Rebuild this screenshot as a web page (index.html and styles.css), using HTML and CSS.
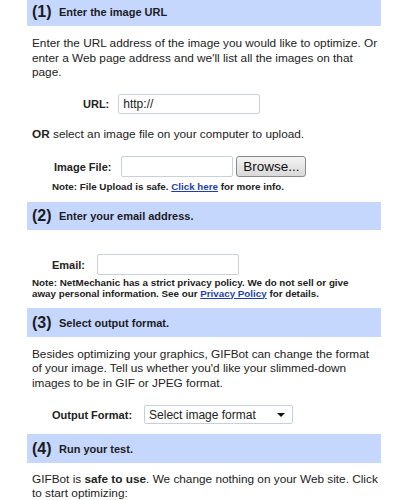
FILE: index.html
```html
<!DOCTYPE html>
<html>
<head>
<meta charset="utf-8">
<link rel="stylesheet" href="styles.css">
</head>
<body>
<div class="form">
  <div class="step first"><span class="num">(1)</span><span class="title">Enter the image URL</span></div>
  <p class="text p1">Enter the URL address of the image you would like to optimize. Or enter a Web page address and we'll list all the images on that page.</p>
  <div class="row row-url"><label>URL:</label><div class="field url">http://</div></div>
  <p class="text p-or"><b>OR</b> select an image file on your computer to upload.</p>
  <div class="row row-file"><label>Image File:</label><div class="field file"></div><div class="browse">Browse...</div></div>
  <p class="note note-file">Note: File Upload is safe. <a href="#">Click here</a> for more info.</p>

  <div class="step s2"><span class="num">(2)</span><span class="title">Enter your email address.</span></div>
  <div class="row row-email"><label>Email:</label><div class="field email"></div></div>
  <p class="note note-email">Note: NetMechanic has a strict privacy policy. We do not sell or give away personal information. See our <a href="#">Privacy Policy</a> for details.</p>

  <div class="step s3"><span class="num">(3)</span><span class="title">Select output format.</span></div>
  <p class="text p3">Besides optimizing your graphics, GIFBot can change the format of your image. Tell us whether you'd like your slimmed-down images to be in GIF or JPEG format.</p>
  <div class="row row-format"><label>Output Format:</label><div class="select"><span>Select image format</span><span class="arrow"></span></div></div>

  <div class="step s4"><span class="num">(4)</span><span class="title">Run your test.</span></div>
  <p class="text p4">GIFBot is <b>safe to use</b>. We change nothing on your Web site. Click to start optimizing:</p>
</div>
</body>
</html>
```
FILE: styles.css
```css
html, body {
  margin: 0;
  padding: 0;
  background: #fff;
  overflow: hidden;
}
body {
  font-family: "Liberation Sans", Arial, sans-serif;
  color: #222;
}
.form {
  width: 354px;
  margin-left: 27px;
  display: flex;
  flex-direction: column;
}
.step {
  height: 28px;
  background: #c6d7fe;
  display: flex;
  align-items: center;
  padding-left: 5px;
  font-weight: bold;
  color: #1c1c24;
}
.step.first { margin-top: -2px; }
.step.s3, .step.s4 { height: 29px; }
.num {
  font-size: 16px;
  width: 27px;
}
.title {
  font-size: 11px;
}
.text {
  margin: 0;
  padding: 0 0 0 5px;
  font-size: 11.8px;
  line-height: 14.5px;
}
.p1 { margin-top: 10px; }
.p-or { margin-top: 13.5px; }
.p3 { margin-top: 9.5px; padding-right: 8px; }
.p4 { margin-top: 8.5px; }
.row {
  display: flex;
  align-items: center;
}
.row label { font-weight: bold; font-size: 11px; }
.row-url { margin-top: 14px; padding-left: 56px; gap: 9px; height: 20px; }
.row-file { margin-top: 14.5px; padding-left: 27px; gap: 10px; height: 21px; }
.row-email { margin-top: 24px; padding-left: 25px; gap: 12px; height: 21px; }
.row-format { margin-top: 15px; padding-left: 25px; gap: 12px; height: 19px; }
.field {
  box-sizing: border-box;
  height: 100%;
  border: 1px solid #c8d0dc;
  border-radius: 2px;
  background: #fff;
  font-size: 12px;
  line-height: 18px;
  padding-left: 4px;
}
.url { width: 142px; }
.file { width: 112px; }
.email { width: 142px; }
.browse {
  box-sizing: border-box;
  margin-left: -7px;
  width: 70px;
  height: 21px;
  border: 1px solid #8a8a8a;
  border-radius: 3px;
  background: linear-gradient(#f4f4f4, #d8d8d8);
  font-size: 13.5px;
  text-align: center;
  line-height: 19px;
  color: #111;
}
.note {
  margin: 0;
  font-size: 9.8px;
  font-weight: bold;
  line-height: 11px;
}
.note a { color: #1f3fa8; }
.note-file { margin-top: 4px; padding-left: 25px; }
.note-email { margin-top: 1.5px; padding: 0 15px 0 5px; }
.s2 { margin-top: 10px; }
.s3 { margin-top: 9.5px; }
.s4 { margin-top: 10px; }
.select {
  box-sizing: border-box;
  width: 149px;
  height: 19px;
  border: 1px solid #c8d0dc;
  border-radius: 2px;
  display: flex;
  align-items: center;
  justify-content: space-between;
  padding: 0 7px 0 4px;
  font-size: 12px;
}
.arrow {
  width: 0;
  height: 0;
  border-left: 4px solid transparent;
  border-right: 4px solid transparent;
  border-top: 4px solid #111;
}
```
